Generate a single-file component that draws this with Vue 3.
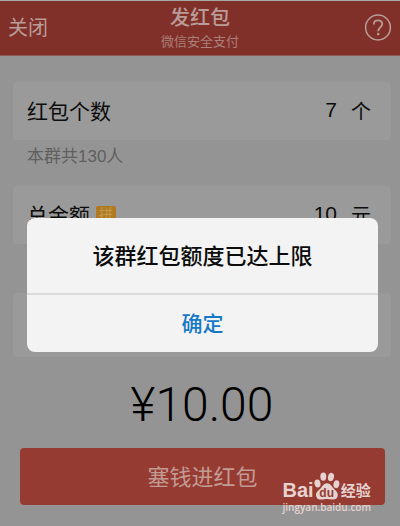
<script setup>
import { ref } from 'vue'

const count = ref('7')
const total = ref('10')
const open = ref(true)
</script>

<template>
  <div class="page">
    <header class="bar">
      <button class="close" type="button">关闭</button>
      <div class="heading">
        <h1>发红包</h1>
        <p>微信安全支付</p>
      </div>
      <button class="help" type="button">
        <svg viewBox="0 0 28 28" width="28" height="28" fill="none" stroke="currentColor">
          <circle cx="14" cy="13.5" r="12.4" stroke-width="1.5" />
          <path d="M9.8 10.400C9.8 7.800 11.6 6.400 14 6.400s4.200 1.500 4.200 3.700c0 3.200-4 3.600-4 7.200" stroke-width="1.8" />
          <circle cx="14.2" cy="20.1" r="1.3" fill="currentColor" stroke="none" />
        </svg>
      </button>
    </header>

    <main class="form">
      <div class="card">
        <label for="count">红包个数</label>
        <input id="count" v-model="count" inputmode="numeric" />
        <span class="unit">个</span>
      </div>
      <p class="hint">本群共130人</p>
      <div class="card">
        <label for="total">总金额</label>
        <span class="tag">拼</span>
        <input id="total" v-model="total" inputmode="decimal" />
        <span class="unit">元</span>
      </div>
      <div class="card note"></div>
      <p class="amount">¥10.00</p>
      <button class="send" type="button">塞钱进红包</button>
    </main>

    <div v-if="open" class="overlay">
      <div class="dialog" role="alertdialog" aria-labelledby="message">
        <p id="message">该群红包额度已达上限</p>
        <button type="button" @click="open = false">确定</button>
      </div>
    </div>

    <div class="watermark">
      <div class="brand">
        <span class="bai">Bai</span>
        <span class="paw">
          <svg viewBox="0 0 26 28" width="26" height="28" fill="currentColor">
            <ellipse cx="3.5" cy="11.5" rx="3" ry="4" transform="rotate(-12 3.5 11.5)" />
            <ellipse cx="9.3" cy="4.6" rx="3" ry="4.2" />
            <ellipse cx="17" cy="5" rx="3" ry="4.2" transform="rotate(12 17 5)" />
            <ellipse cx="22.4" cy="12.2" rx="2.9" ry="4" transform="rotate(12 22.4 12.2)" />
            <path d="M13 11.2c3.2 0 4.6 2.9 6.400 5 1.800 2.100 4.400 3.700 4.400 6.900 0 3-2.100 4.500-4.900 4.500-2.100 0-3.800-.5-5.900-.5s-3.700.5-5.900.5c-3 0-5.100-1.700-5.100-4.700 0-3.100 2.800-4.500 4.700-6.700 1.800-2.100 3.100-5 6.300-5z" />
          </svg>
          <span class="du">du</span>
        </span>
        <span class="jingyan">经验</span>
      </div>
      <span class="site">jingyan.baidu.com</span>
    </div>
  </div>
</template>

<style>
body {
  background: #949494;
}
</style>

<style scoped>
.page {
  position: relative;
  min-height: 100vh;
  box-sizing: border-box;
  overflow: hidden;
  background: #949494;
  color: #0c0c0c;
  font-family: "Liberation Sans", "Noto Sans CJK SC", sans-serif;
}

h1,
p {
  margin: 0;
  font-weight: 400;
}

button {
  padding: 0;
  border: 0;
  background: none;
  color: inherit;
  font: inherit;
}

.bar {
  display: grid;
  grid-template-columns: 1fr auto 1fr;
  align-items: center;
  height: 54px;
  padding: 0 8px;
  border-top: 1px solid #a3a8a8;
  border-bottom: 1px solid #8a5a55;
  background: #803029;
  color: #b99c98;
}

.close {
  justify-self: start;
  font-size: 20px;
  line-height: 24px;
}

.heading {
  text-align: center;
}

h1 {
  font-size: 20px;
  line-height: 28px;
  font-weight: 500;
}

.heading p {
  font-size: 13px;
  line-height: 20px;
  color: #ab7f7a;
}

.help {
  justify-self: end;
  height: 28px;
}

.help svg {
  display: block;
}

.form {
  display: flex;
  flex-direction: column;
  padding: 26px 9px 20px 13px;
}

.card {
  display: flex;
  align-items: center;
  height: 58px;
  box-sizing: border-box;
  padding: 0 20px 2px 14px;
  border-radius: 4px;
  background: #9a9a9a;
  font-size: 21px;
}

.card input {
  flex: 1;
  min-width: 0;
  padding: 0;
  border: 0;
  outline: 0;
  background: none;
  color: inherit;
  font: inherit;
  text-align: right;
}

.unit {
  margin-left: 14px;
  font-size: 20px;
}

.hint {
  padding: 5px 14px 17px;
  font-size: 17px;
  line-height: 24px;
  color: #5f5f5f;
}

.tag {
  margin-left: 6px;
  padding: 0 3px;
  border-radius: 2px;
  background: #b07a20;
  color: #c29950;
  font-size: 14px;
  line-height: 16px;
}

.note {
  margin-top: 49px;
  height: 64px;
}

.amount {
  padding: 20px 0 15px;
  font-family: Roboto, "Liberation Sans", sans-serif;
  font-size: 48px;
  font-weight: 300;
  line-height: 56px;
  text-align: center;
  color: #000;
}

.send {
  height: 57px;
  margin: 0 6px 0 7px;
  padding-bottom: 4px;
  border-radius: 4px;
  background: #963b31;
  color: #c39b95;
  font-size: 22px;
}

.overlay {
  position: absolute;
  inset: 0;
  padding: 218px 22px 0 27px;
}

.dialog {
  border-radius: 8px;
  background: #f3f3f3;
  text-align: center;
}

.dialog p {
  padding: 23px 0 20px;
  border-bottom: 2px solid #d9d9d9;
  font-size: 22px;
  line-height: 32px;
  font-weight: 500;
}

.dialog button {
  width: 100%;
  height: 57px;
  padding-bottom: 4px;
  color: #1579c6;
  font-size: 21px;
  font-weight: 500;
}

.watermark {
  position: absolute;
  right: 29px;
  bottom: 12px;
  color: #e6d2d0;
}

.brand {
  display: flex;
  align-items: flex-end;
  height: 28px;
}

.bai {
  font-size: 20px;
  font-weight: 700;
  line-height: 20px;
}

.paw {
  display: grid;
  width: 26px;
  height: 28px;
}

.paw svg,
.du {
  grid-area: 1 / 1;
}

.du {
  align-self: end;
  color: #963b31;
  font-size: 12px;
  font-weight: 700;
  line-height: 13px;
  text-align: center;
}

.jingyan {
  margin-left: 1px;
  font-size: 15px;
  font-weight: 700;
  line-height: 19px;
}

.site {
  display: block;
  font-family: "Open Sans", "Noto Sans", sans-serif;
  font-size: 10px;
  font-weight: 600;
  line-height: 14px;
}
</style>
